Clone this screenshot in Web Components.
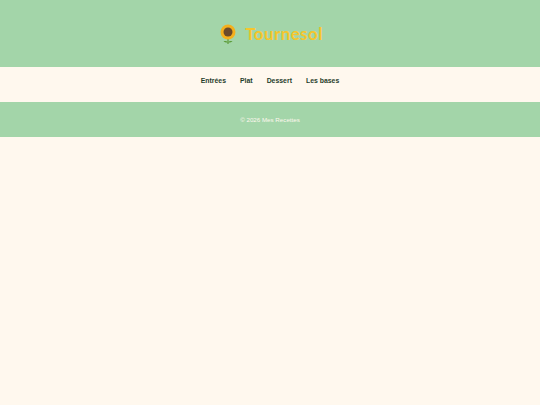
<!DOCTYPE html>
<html lang="fr">
<head>
<meta charset="utf-8">
<title>Tournesol</title>
<style>
  html, body { margin: 0; height: 100%; background: #fff8ee; font-family: "Liberation Sans", Arial, sans-serif; }
</style>
</head>
<body>
<site-header>Tournesol</site-header>
<site-nav>
  <a href="#">Entrées</a>
  <a href="#">Plat</a>
  <a href="#">Dessert</a>
  <a href="#">Les bases</a>
</site-nav>
<site-footer>© 2026 Mes Recettes</site-footer>
<script>
class SiteHeader extends HTMLElement {
  constructor() {
    super();
    this.attachShadow({ mode: 'open' });
    this.shadowRoot.innerHTML = `
      <style>
        :host { display: flex; justify-content: center; align-items: center; gap: 9.500px; height: 67px; background: #a3d5a9; }
        svg { width: 16px; height: 20px; display: block; margin-left: 2.500px; }
        h1 { margin: 0; font: bold 17px "Lato", sans-serif; letter-spacing: .4px; color: #f5c62c; }
      </style>
      <svg viewBox="0 0 16 20" aria-hidden="true">
        <path d="M8 14v6" stroke="#5d9c3a" stroke-width="1.200"/>
        <path d="M8 18.500c-1-1.500-2.500-1.800-4.500-1.500 1 1.400 3 1.800 4.500 1.500zM8 18.500c1-1.500 2.500-1.800 4.500-1.500-1 1.400-3 1.800-4.500 1.500z" fill="#5d9c3a"/>
        <circle cx="8" cy="8" r="7.500" fill="#f4b01e"/>
        <circle cx="8" cy="8" r="4.500" fill="#6b4a2b"/>
      </svg>
      <h1><slot></slot></h1>`;
  }
}

class SiteNav extends HTMLElement {
  constructor() {
    super();
    this.attachShadow({ mode: 'open' });
    this.shadowRoot.innerHTML = `
      <style>
        :host { display: flex; justify-content: center; gap: 14px; height: 35px; padding-top: 9px; box-sizing: border-box; font-size: 6.900px; }
        ::slotted(a) { color: #1f3d2b; font-weight: bold; text-decoration: none; line-height: 10px; }
      </style>
      <slot></slot>`;
  }
}

class SiteFooter extends HTMLElement {
  constructor() {
    super();
    this.attachShadow({ mode: 'open' });
    this.shadowRoot.innerHTML = `
      <style>
        :host { display: flex; justify-content: center; align-items: center; height: 35px; background: #a3d5a9; color: #fff8ee; font-size: 6.200px; }
      </style>
      <slot></slot>`;
  }
}

customElements.define('site-header', SiteHeader);
customElements.define('site-nav', SiteNav);
customElements.define('site-footer', SiteFooter);
</script>
</body>
</html>
